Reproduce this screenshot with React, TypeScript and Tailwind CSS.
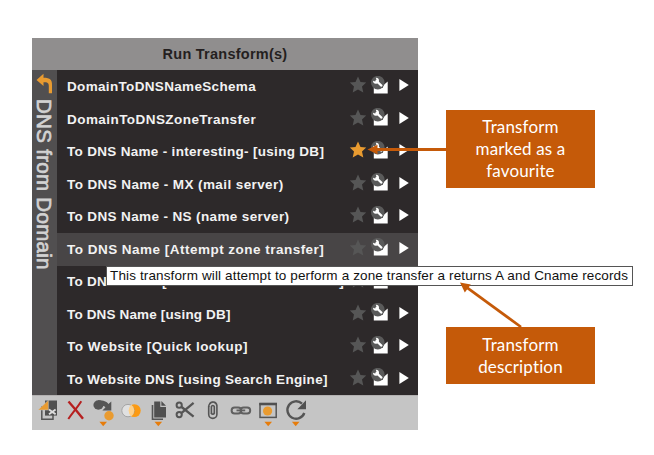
import React from 'react';

type Transform = { name: string; tracking: string; favourite?: boolean; active?: boolean };

const transforms: Transform[] = [
  { name: 'DomainToDNSNameSchema', tracking: 'tracking-[0.33px]' },
  { name: 'DomainToDNSZoneTransfer', tracking: 'tracking-[0.44px]' },
  { name: 'To DNS Name - interesting- [using DB]', tracking: 'tracking-[0.31px]', favourite: true },
  { name: 'To DNS Name - MX (mail server)', tracking: 'tracking-[0.4px]' },
  { name: 'To DNS Name - NS (name server)', tracking: 'tracking-[0.37px]' },
  { name: 'To DNS Name [Attempt zone transfer]', tracking: 'tracking-[0.48px]', active: true },
  { name: 'To DNS Name [Find common DNS names]', tracking: 'tracking-[0.25px]' },
  { name: 'To DNS Name [using DB]', tracking: 'tracking-[0.15px]' },
  { name: 'To Website [Quick lookup]', tracking: 'tracking-[0.48px]' },
  { name: 'To Website DNS [using Search Engine]', tracking: 'tracking-[0.32px]' },
];

function Star({ on }: { on?: boolean }) {
  return (
    <svg width="18" height="18" viewBox="0 0 18 18" fill={on ? '#e99b30' : '#565656'}>
      <path d="M9 .4 11.5 5.9 17.2 6.5 13 10.5 14.3 16.4 9 13.5 3.7 16.4 5 10.5 .8 6.5 6.5 5.9Z" />
    </svg>
  );
}

function Settings() {
  return (
    <svg width="18" height="19" viewBox="0 0 18 19">
      <path d="M2.8 12H11.5L12.6 9 16.7 5.6V17.4H2.8Z" fill="#fff" />
      <circle cx="6.8" cy="6.6" r="6.8" fill="#5a5a5a" />
      <path d="M5.5 5 10.4 9.6" stroke="#fff" strokeWidth="2.2" strokeLinecap="round" />
      <path d="M4.8 1.7A3 3 0 1 1 2 4.8L4.2 5.6 5.6 4.2Z" fill="#fff" />
    </svg>
  );
}

function Row({ item }: { item: Transform }) {
  return (
    <li className={`flex h-[32.5px] items-center pl-2.5 pr-[9px] ${item.active ? 'bg-[#484546]' : ''}`}>
      <span className={`flex-1 whitespace-nowrap pt-px text-[13.5px] font-bold leading-4 text-[#f2f2f2] ${item.tracking}`}>
        {item.name}
      </span>
      <span className="flex items-center pb-[3px]">
        <Star on={item.favourite} />
        <span className="ml-1">
          <Settings />
        </span>
        <svg className="ml-2.5" width="10" height="14" viewBox="0 0 10 14">
          <path d="M.4 .9V13.1L9.8 7Z" fill="#fff" />
        </svg>
      </span>
    </li>
  );
}

function Toolbar() {
  return (
    <svg className="block" width="386" height="35" viewBox="32 395 386 35" fill="none">
      <path d="M32 395.5H418" stroke="#b3b1b1" />
      <path d="M46 407H41.8V419.2H53V413" stroke="#555" strokeWidth="1.5" />
      <path d="M45 400.5H57V415.6H45Z" fill="#505050" />
      <path d="M38 410 48.4 400.3V410Z" fill="#e99b30" stroke="#c5c5c5" strokeWidth=".5" />
      <path d="M49 409.5 55.6 414.3M55.6 409.5 49 414.3" stroke="#ddd" strokeWidth="1.8" />

      <path d="M68.5 401.5C73 406.5 78 412.5 83 418.8" stroke="#b62020" strokeWidth="2.4" />
      <path d="M81.3 401.2C77 408 73 412 68.3 419" stroke="#b62020" strokeWidth="2" />

      <ellipse cx="98.4" cy="405" rx="5" ry="4.7" fill="#555" />
      <path d="M98 400.3C104 400.4 106.5 401.5 108.4 404L111.3 401.6V410.4H102.4L105.4 407.4C103 404.6 102 407 98 408.5Z" fill="#555" />
      <circle cx="109" cy="415.8" r="4.7" fill="#e99b30" />

      <circle cx="134.3" cy="410.6" r="6.4" fill="#fb9a12" />
      <circle cx="128" cy="410.6" r="6.2" fill="#e0e0e0" stroke="#999" strokeWidth=".8" />
      <path d="M131.4 404.8A7.4 7.4 0 0 1 131.4 416.4A7.4 7.4 0 0 1 131.4 404.8Z" fill="#ffd087" />

      <path d="M152.5 405V419.2H163" stroke="#555" strokeWidth="1.6" />
      <path d="M154.2 401.4H160.3V407H166V417.6H154.2Z" fill="#505050" />
      <path d="M161.4 400.9 166 405.8H161.4Z" fill="#505050" />

      <circle cx="179.2" cy="405.2" r="2.6" stroke="#555" strokeWidth="2" />
      <circle cx="179.2" cy="414.6" r="2.6" stroke="#555" strokeWidth="2" />
      <path d="M181.6 407 193.6 416.7M181.6 412.8 193.6 402.8" stroke="#555" strokeWidth="2.3" />

      <path d="M208.7 406V414.3A4.1 4.1 0 0 0 216.9 414.3V405.6A4 4 0 0 0 209.6 403.8M211.4 414V406.6A1.5 1.5 0 0 1 214.3 406.6V413.8" stroke="#555" strokeWidth="1.6" />
      <path d="M208.7 407A4.1 4.4 0 0 1 212.8 402.3M211.4 413A1.5 1.8 0 0 0 214.3 413" stroke="#555" strokeWidth="1.5" />

      <rect x="231.6" y="407.4" width="9.6" height="6" rx="3" stroke="#606060" strokeWidth="2" />
      <rect x="240.6" y="407.4" width="9.6" height="6" rx="3" stroke="#606060" strokeWidth="2" />
      <path d="M236.5 410.4H245.2" stroke="#606060" strokeWidth="1.8" />

      <rect x="260" y="403.8" width="16.2" height="13.6" stroke="#555" strokeWidth="1.5" />
      <path d="M259.3 404H277" stroke="#505050" strokeWidth="2.6" />
      <circle cx="267.6" cy="411" r="4.6" fill="#e99b30" />

      <path d="M302 403.6A8.7 8.7 0 1 0 304.3 413" stroke="#555" strokeWidth="2.4" />
      <path d="M306 400.3V409.2H297.4Z" fill="#505050" />

      {[103.2, 158.3, 268.2, 295.7].map((x) => (
        <path key={x} d={`M${x - 3.8} 421.7H${x + 3.8}L${x} 426.3Z`} fill="#e67c0b" />
      ))}
    </svg>
  );
}

function Callout({ lines, place }: { lines: string[]; place: string }) {
  return (
    <div
      className={`absolute left-[446px] flex w-[149px] flex-col items-center justify-center bg-[#c55a09] font-['Lato','Open_Sans',sans-serif] text-[17px] leading-[22px] tracking-[0.15px] text-white ${place}`}
    >
      {lines.map((line) => (
        <span key={line}>{line}</span>
      ))}
    </div>
  );
}

export default function App() {
  return (
    <main className="relative h-[455px] w-[654px] overflow-hidden bg-white pl-8 pt-[38px] font-['Liberation_Sans',Arial,sans-serif]">
      <section className="flex w-[386px] flex-col">
        <header className="flex h-8 items-center justify-center bg-[#908e8e] pt-0.5 text-[14.5px] font-bold tracking-[0.25px] text-[#241f20]">
          Run Transform(s)
        </header>
        <div className="flex h-[325px]">
          <aside className="flex w-[25px] flex-col items-center bg-[#514f50] pt-[3px]">
            <svg width="17" height="22" viewBox="0 0 17 22">
              <path d="M.5 7 7.5 .8V4.8C14.5 4.8 16 7 16 12V20.3H12.8V13C12.8 9.8 11.5 9.2 7.5 9.2V13Z" fill="#e99b30" />
            </svg>
            <span className="mt-[4px] whitespace-nowrap text-[20.5px] leading-[25px] tracking-[0.3px] text-[#d2d2d2] [-webkit-text-stroke:0.7px_#d2d2d2] [writing-mode:vertical-rl]">
              DNS from Domain
            </span>
          </aside>
          <ul className="flex-1 bg-[#2d292a] pt-[0.5px]">
            {transforms.map((item) => (
              <Row key={item.name} item={item} />
            ))}
          </ul>
        </div>
        <footer className="h-[35px] bg-[#c5c5c5]">
          <Toolbar />
        </footer>
      </section>

      <div className="absolute left-[106px] top-[266px] flex h-5 w-[527px] items-center whitespace-nowrap border border-[#555] bg-white pl-[3px] pt-px text-[13.5px] tracking-[0.13px] text-[#111]">
        This transform will attempt to perform a zone transfer a returns A and Cname records
      </div>

      <Callout lines={['Transform', 'marked as a', 'favourite']} place="top-[110px] h-[78px]" />
      <Callout lines={['Transform', 'description']} place="top-[327px] h-[57px]" />

      <svg className="absolute left-0 top-0" width="654" height="455" fill="#c55a09">
        <path d="M446 149.5H376" stroke="#c55a09" strokeWidth="2.8" />
        <path d="M367.5 149.5 377.5 144.7V154.3Z" />
        <path d="M521 327 466 286.8" stroke="#c55a09" strokeWidth="2.7" />
        <path d="M460 282.6 470.8 284.6 464.8 292.4Z" />
      </svg>
    </main>
  );
}
